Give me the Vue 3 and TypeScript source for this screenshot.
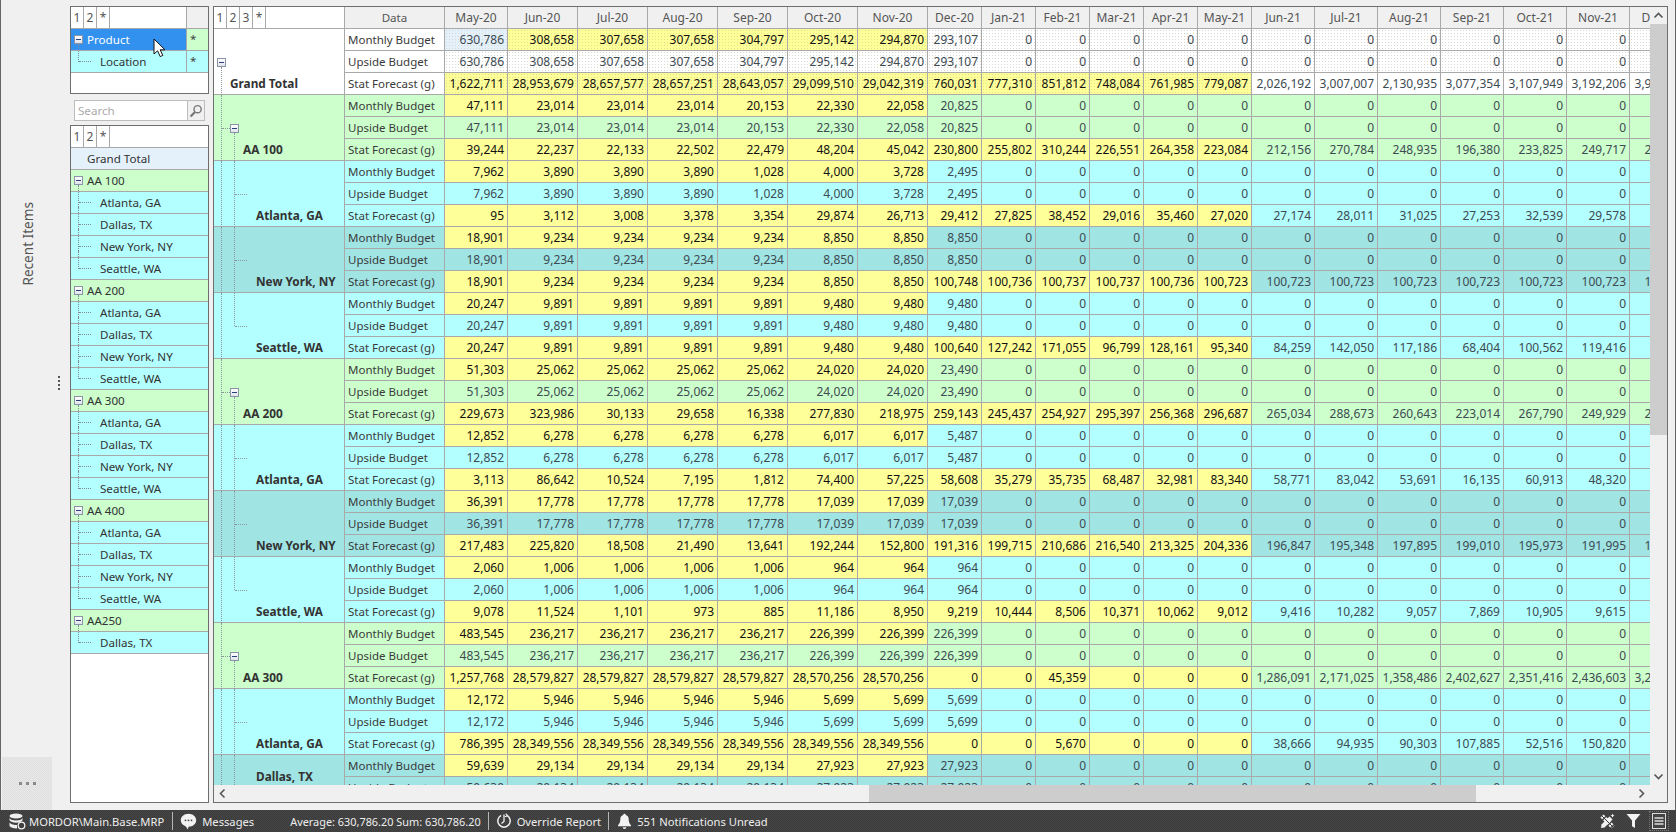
<script setup lang="ts">
type Tone = "white" | "green" | "cyan" | "teal"

interface Section {
  label: string
  level: number
  tone: Tone
  budget: string[]
  stat: string[]
  lastChild?: boolean
  cutOff?: boolean
}

const months = [
  "May-20", "Jun-20", "Jul-20", "Aug-20", "Sep-20", "Oct-20", "Nov-20", "Dec-20",
  "Jan-21", "Feb-21", "Mar-21", "Apr-21", "May-21", "Jun-21", "Jul-21", "Aug-21",
  "Sep-21", "Oct-21", "Nov-21", "Dec-21",
]
const widths = [63, 70, 70, 70, 70, 70, 70, 54, 54, 54, 54, 54, 54, 63, 63, 63, 63, 63, 63, 63]

const rowNames = ["Monthly Budget", "Upside Budget", "Stat Forecast (g)"]

const w = (v: string, n: number) => Array<string>(n).fill(v)

const sections: Section[] = [
  {
    label: "Grand Total", level: 0, tone: "white",
    budget: ["630,786", "308,658", "307,658", "307,658", "304,797", "295,142", "294,870", "293,107"],
    stat: ["1,622,711", "28,953,679", "28,657,577", "28,657,251", "28,643,057", "29,099,510", "29,042,319", "760,031", "777,310", "851,812", "748,084", "761,985", "779,087", "2,026,192", "3,007,007", "2,130,935", "3,077,354", "3,107,949", "3,192,206", "3,912,340"],
  },
  {
    label: "AA 100", level: 1, tone: "green",
    budget: ["47,111", ...w("23,014", 3), "20,153", "22,330", "22,058", "20,825"],
    stat: ["39,244", "22,237", "22,133", "22,502", "22,479", "48,204", "45,042", "230,800", "255,802", "310,244", "226,551", "264,358", "223,084", "212,156", "270,784", "248,935", "196,380", "233,825", "249,717", "256,120"],
  },
  {
    label: "Atlanta, GA", level: 2, tone: "cyan",
    budget: ["7,962", ...w("3,890", 3), "1,028", "4,000", "3,728", "2,495"],
    stat: ["95", "3,112", "3,008", "3,378", "3,354", "29,874", "26,713", "29,412", "27,825", "38,452", "29,016", "35,460", "27,020", "27,174", "28,011", "31,025", "27,253", "32,539", "29,578", "30,112"],
  },
  {
    label: "New York, NY", level: 2, tone: "teal",
    budget: ["18,901", ...w("9,234", 4), ...w("8,850", 3)],
    stat: ["18,901", ...w("9,234", 4), "8,850", "8,850", "100,748", "100,736", "100,737", "100,737", "100,736", ...w("100,723", 8)],
  },
  {
    label: "Seattle, WA", level: 2, tone: "cyan", lastChild: true,
    budget: ["20,247", ...w("9,891", 4), ...w("9,480", 3)],
    stat: ["20,247", ...w("9,891", 4), "9,480", "9,480", "100,640", "127,242", "171,055", "96,799", "128,161", "95,340", "84,259", "142,050", "117,186", "68,404", "100,562", "119,416", "90,311"],
  },
  {
    label: "AA 200", level: 1, tone: "green",
    budget: ["51,303", ...w("25,062", 4), "24,020", "24,020", "23,490"],
    stat: ["229,673", "323,986", "30,133", "29,658", "16,338", "277,830", "218,975", "259,143", "245,437", "254,927", "295,397", "256,368", "296,687", "265,034", "288,673", "260,643", "223,014", "267,790", "249,929", "261,004"],
  },
  {
    label: "Atlanta, GA", level: 2, tone: "cyan",
    budget: ["12,852", ...w("6,278", 4), "6,017", "6,017", "5,487"],
    stat: ["3,113", "86,642", "10,524", "7,195", "1,812", "74,400", "57,225", "58,608", "35,279", "35,735", "68,487", "32,981", "83,340", "58,771", "83,042", "53,691", "16,135", "60,913", "48,320", "51,220"],
  },
  {
    label: "New York, NY", level: 2, tone: "teal",
    budget: ["36,391", ...w("17,778", 4), ...w("17,039", 3)],
    stat: ["217,483", "225,820", "18,508", "21,490", "13,641", "192,244", "152,800", "191,316", "199,715", "210,686", "216,540", "213,325", "204,336", "196,847", "195,348", "197,895", "199,010", "195,973", "191,995", "193,402"],
  },
  {
    label: "Seattle, WA", level: 2, tone: "cyan", lastChild: true,
    budget: ["2,060", ...w("1,006", 4), ...w("964", 3)],
    stat: ["9,078", "11,524", "1,101", "973", "885", "11,186", "8,950", "9,219", "10,444", "8,506", "10,371", "10,062", "9,012", "9,416", "10,282", "9,057", "7,869", "10,905", "9,615", "9,880"],
  },
  {
    label: "AA 300", level: 1, tone: "green",
    budget: ["483,545", ...w("236,217", 4), ...w("226,399", 3)],
    stat: ["1,257,768", ...w("28,579,827", 4), "28,570,256", "28,570,256", "0", "0", "45,359", "0", "0", "0", "1,286,091", "2,171,025", "1,358,486", "2,402,627", "2,351,416", "2,436,603", "3,204,118"],
  },
  {
    label: "Atlanta, GA", level: 2, tone: "cyan",
    budget: ["12,172", ...w("5,946", 4), ...w("5,699", 3)],
    stat: ["786,395", ...w("28,349,556", 6), "0", "0", "5,670", "0", "0", "0", "38,666", "94,935", "90,303", "107,885", "52,516", "150,820", "98,000"],
  },
  {
    label: "Dallas, TX", level: 2, tone: "teal", cutOff: true,
    budget: ["59,639", ...w("29,134", 4), ...w("27,923", 3)],
    stat: [],
  },
]

const listGroups = [
  { name: "AA 100", items: ["Atlanta, GA", "Dallas, TX", "New York, NY", "Seattle, WA"] },
  { name: "AA 200", items: ["Atlanta, GA", "Dallas, TX", "New York, NY", "Seattle, WA"] },
  { name: "AA 300", items: ["Atlanta, GA", "Dallas, TX", "New York, NY", "Seattle, WA"] },
  { name: "AA 400", items: ["Atlanta, GA", "Dallas, TX", "New York, NY", "Seattle, WA"] },
  { name: "AA250", items: ["Dallas, TX"] },
]

function rowValues(s: Section, row: number): string[] {
  if (row === 2) return s.stat.length ? s.stat : w("0", 20)
  return months.map((_, i) => s.budget[i] ?? "0")
}

function cellClass(s: Section, row: number, col: number) {
  const yellow = row === 0 ? col < 7 : row === 2 ? col < 13 : false
  const grand = s.level === 0
  return {
    yellow: yellow && !(grand && row === 0 && col === 0),
    stipple: grand && !(row === 2 && col >= 13),
    picked: grand && row === 0 && col === 0,
  }
}
</script>

<template>
  <div class="window">
    <div class="workspace">
      <aside class="recent">
        <div class="recent-title"><span>Recent Items</span></div>
        <div class="recent-more">
          <i></i><i></i><i></i>
        </div>
      </aside>

      <div class="splitter">
        <i></i><i></i><i></i><i></i>
      </div>

      <div class="left-pane">
        <section class="box fields">
          <div class="line head">
            <span class="lvl">1</span><span class="lvl">2</span><span class="lvl">*</span>
            <span class="fill"></span>
            <span class="star-head"></span>
          </div>
          <div class="line picked-line">
            <span class="minus"></span>
            <span class="fill name-top">Product</span>
            <span class="star green">*</span>
          </div>
          <div class="line cyan">
            <span class="conn top-conn"></span>
            <span class="fill name-child">Location</span>
            <span class="star cyan">*</span>
          </div>
        </section>

        <div class="search">
          <span class="search-text">Search</span>
          <span class="search-btn">
            <svg width="14" height="14" viewBox="0 0 14 14" fill="none" stroke="#777" stroke-width="1.4">
              <circle cx="8.6" cy="5.2" r="3.6" />
              <path d="M6 8 1.6 12.6" stroke-width="2.2" />
            </svg>
          </span>
        </div>

        <section class="box list">
          <div class="line head">
            <span class="lvl">1</span><span class="lvl">2</span><span class="lvl">*</span>
            <span class="fill"></span>
          </div>
          <div class="line total"><span class="name-top pad">Grand Total</span></div>
          <template v-for="group in listGroups" :key="group.name">
            <div class="line green">
              <span class="minus"></span>
              <span class="name-top">{{ group.name }}</span>
            </div>
            <div v-for="(item, i) in group.items" :key="item" class="line cyan">
              <span class="conn" :class="{ 'conn-end': i === group.items.length - 1 }"></span>
              <span class="name-child">{{ item }}</span>
            </div>
          </template>
        </section>
      </div>

      <section class="box pivot">
        <div class="pivot-top">
          <div class="viewport">
            <div class="sheet">
              <div class="pivot-head">
                <div class="corner">
                  <span class="lvl">1</span><span class="lvl">2</span><span class="lvl">3</span><span class="lvl">*</span>
                </div>
                <div class="data-head">Data</div>
                <div v-for="(m, i) in months" :key="m" class="month" :style="{ width: widths[i] + 'px' }">{{ m }}</div>
              </div>

              <div v-for="(s, si) in sections" :key="si" class="group" :class="s.tone">
                <div class="group-head" :class="'level-' + s.level">
                  <span v-if="s.level > 0" class="tree-v1"></span>
                  <span v-if="s.level === 0" class="tree-v1 from-icon"></span>
                  <span v-if="s.level === 1" class="tree-v2 from-icon"></span>
                  <span v-if="s.level === 2" class="tree-v2" :class="{ 'to-mid': s.lastChild }"></span>
                  <span v-if="s.level === 1" class="tree-h h1"></span>
                  <span v-if="s.level === 2" class="tree-h h2"></span>
                  <span v-if="s.level < 2" class="minus tree-icon"></span>
                  <span class="group-label" :class="{ 'cut-off': s.cutOff }">{{ s.label }}</span>
                </div>
                <div class="group-rows">
                  <div v-for="(name, r) in rowNames" :key="name" class="row">
                    <div class="row-name">{{ name }}</div>
                    <div
                      v-for="(val, c) in rowValues(s, r)"
                      :key="c"
                      class="cell"
                      :class="cellClass(s, r, c)"
                      :style="{ width: widths[c] + 'px' }"
                    >{{ val }}</div>
                  </div>
                </div>
              </div>
            </div>
          </div>

          <div class="vscroll">
            <svg class="arrow" width="17" height="17" viewBox="0 0 17 17" fill="none" stroke="#555" stroke-width="1.6"><path d="M4.5 10.5 8.5 6.5l4 4" /></svg>
            <div class="vtrack"><div class="vthumb"></div></div>
            <svg class="arrow" width="17" height="17" viewBox="0 0 17 17" fill="none" stroke="#555" stroke-width="1.6"><path d="M4.5 6.5 8.5 10.5l4-4" /></svg>
          </div>
        </div>
        <div class="hscroll">
          <svg class="arrow" width="17" height="17" viewBox="0 0 17 17" fill="none" stroke="#555" stroke-width="1.6"><path d="M10.5 4.5 6.5 8.5l4 4" /></svg>
          <div class="htrack"><div class="hthumb"></div></div>
          <svg class="arrow" width="17" height="17" viewBox="0 0 17 17" fill="none" stroke="#555" stroke-width="1.6"><path d="M6.5 4.5 10.5 8.5l-4 4" /></svg>
          <span class="scroll-corner"></span>
        </div>
      </section>

      <svg class="cursor" width="14" height="20" viewBox="0 0 14 20">
        <path d="M1 1v15l3.6-3.2 2.6 5.8 2.6-1.2-2.6-5.6H12z" fill="#fff" stroke="#111" stroke-width="1" />
      </svg>
    </div>

    <footer class="status">
      <svg class="s-db" width="17" height="17" viewBox="0 0 17 17" fill="#eee">
        <ellipse cx="7" cy="3" rx="6.5" ry="2.6" />
        <path d="M.5 5c1 1.800 3.500 2.500 6.500 2.500S12.500 6.800 13.500 5v2.300c-1 1.700-3.500 2.400-6.500 2.400S1.500 9 .5 7.300z" />
        <path d="M.5 9.600c1 1.700 3.500 2.400 6.500 2.400h1v3.500c-4 0-6.500-1-7.500-2.500z" />
        <circle cx="12.500" cy="12.500" r="3.300" fill="none" stroke="#eee" stroke-width="1.300" />
      </svg>
      <span class="s-text s-path">MORDOR\Main.Base.MRP</span>
      <i class="s-sep s-sep1"></i>
      <svg class="s-msg" width="17" height="17" viewBox="0 0 17 17">
        <path d="M8.500.8c4.300 0 7.700 2.900 7.700 6.500s-3.400 6.500-7.700 6.500l-.6 2.800-2.300-3.300C2.800 12.300.8 10 .8 7.300.8 3.700 4.200.8 8.500.8z" fill="#f2f2f2" />
        <circle cx="5.500" cy="7.300" r=".9" fill="#444" /><circle cx="8.500" cy="7.300" r=".9" fill="#444" /><circle cx="11.500" cy="7.300" r=".9" fill="#444" />
      </svg>
      <span class="s-text s-messages">Messages</span>
      <span class="s-text s-avg">Average: 630,786.20 Sum: 630,786.20</span>
      <i class="s-sep s-sep2"></i>
      <svg class="s-over" width="16" height="16" viewBox="0 0 16 16" fill="none" stroke="#f0f0f0" stroke-width="1.500">
        <path d="M5.200 2.400a6.200 6.200 0 1 0 5.600 0" />
        <path d="M8 1.500v7L5.500 10.500" stroke-width="1.300" />
        <path d="M9.800 .6 11.500 2.800 9 3.800" stroke-width="1.200" />
      </svg>
      <span class="s-text s-report">Override Report</span>
      <i class="s-sep s-sep3"></i>
      <svg class="s-bell" width="15" height="16" viewBox="0 0 15 16" fill="#f2f2f2">
        <path d="M7.500 .8c.8 0 1.300.6 1.300 1.300 2 .6 2.900 2.200 2.900 4.400 0 2.800.8 4.300 2.300 5.700v1H1v-1c1.500-1.400 2.300-2.900 2.300-5.700 0-2.200.9-3.800 2.900-4.400 0-.7.500-1.300 1.300-1.300z" />
        <path d="M5.700 14.200h3.600a1.800 1.800 0 0 1-3.600 0z" />
      </svg>
      <span class="s-text s-notes">551 Notifications Unread</span>
      <span class="s-spacer"></span>
      <svg class="s-tools" width="17" height="17" viewBox="0 0 17 17" fill="none" stroke="#f2f2f2">
        <path d="M2.500 11.500 10.500 3.500l3 3-8 8-3.500.5z" fill="#f2f2f2" stroke="none" />
        <path d="M3 3 14 14" stroke-width="4.500" stroke-dasharray="2.500 1.300" />
        <path d="M3 3 14 14" stroke="#3c3c3c" stroke-width="1" />
        <path d="M13.500 .6l.6 1.500 1.500.6-1.500.6-.6 1.500-.6-1.500-1.500-.6 1.500-.6z" fill="#f2f2f2" stroke="none" />
      </svg>
      <svg class="s-funnel" width="15" height="16" viewBox="0 0 15 16" fill="#f2f2f2">
        <path d="M.5 1h14L9 7.500V15l-3-1.800V7.500z" />
      </svg>
      <span class="s-list">
        <svg width="14" height="16" viewBox="0 0 14 16" fill="none" stroke="#ddd">
          <rect x=".5" y=".5" width="13" height="15" fill="#444" />
          <path d="M2.500 5h9M2.500 8h9M2.500 11h9" stroke-width="1.600" />
        </svg>
      </span>
    </footer>
  </div>
</template>

<style scoped>
.window {
  position: relative;
  display: flex;
  flex-direction: column;
  width: 1676px;
  height: 832px;
  overflow: hidden;
  box-sizing: border-box;
  background: #f0f0f0;
  font-family: "Noto Sans", "Open Sans", sans-serif;
  font-size: 12px;
  color: #333;
}

.workspace {
  flex: 1;
  min-height: 0;
  display: flex;
  box-sizing: border-box;
  padding: 6px 7px 7px 1px;
  border-left: 1px solid #666;
  border-right: 1px solid #666;
}

.recent {
  width: 50px;
  margin: -6px 0 -7px 0;
  display: flex;
  flex-direction: column;
}

.recent-title {
  flex: 1;
  display: flex;
  align-items: center;
  justify-content: center;
  padding-bottom: 270px;
}

.recent-title span {
  writing-mode: vertical-rl;
  transform: rotate(180deg);
  font-size: 13.6px;
  color: #555;
}

.recent-more {
  height: 53px;
  display: flex;
  align-items: center;
  justify-content: center;
  gap: 4px;
  background-color: #e9e9e9;
  background-image: repeating-conic-gradient(#dedede 0 25%, transparent 0 50%);
  background-size: 2px 2px;
}

.recent-more i {
  width: 3px;
  height: 3px;
  background: #8a8a8a;
}

.splitter {
  width: 18px;
  display: flex;
  flex-direction: column;
  align-items: flex-start;
  justify-content: center;
  gap: 2px;
  padding: 0 0 44px 6px;
  box-sizing: border-box;
}

.splitter i {
  width: 2px;
  height: 2px;
  background: #555;
}

.box {
  box-sizing: border-box;
  background: #fff;
  border: 1px solid #6e6e6e;
}

.left-pane {
  width: 139px;
  margin-right: 4px;
  display: flex;
  flex-direction: column;
}

.fields {
  height: 88px;
  flex-shrink: 0;
}

.line {
  display: flex;
  align-items: center;
  height: 22px;
  box-sizing: border-box;
  border-bottom: 1px solid #a9a9a9;
  position: relative;
  font-size: 11.6px;
}

.head {
  border-bottom-color: #a9a9a9;
  color: #555;
}

.lvl {
  width: 13px;
  height: 100%;
  box-sizing: border-box;
  border-right: 1px solid #a9a9a9;
  text-align: center;
  line-height: 21px;
  font-size: 12px;
  color: #555;
  flex-shrink: 0;
}

.fill {
  flex: 1;
}

.star-head {
  width: 22px;
  height: 100%;
  box-sizing: border-box;
  background: #f0f0f0;
  border-left: 1px solid #a9a9a9;
}

.star {
  width: 22px;
  height: 100%;
  box-sizing: border-box;
  border-left: 1px solid #a9a9a9;
  padding: 1px 0 0 3px;
  line-height: 18px;
  color: #444;
}

.green {
  background: #ccffcc;
}

.cyan {
  background: #b3ffff;
}

.teal {
  background: #a0e4e4;
}

.white {
  background: #fff;
}

.picked-line {
  background: #3291ee;
  color: #fff;
}

.total {
  background: #e4f1fb;
}

.minus {
  position: relative;
  display: block;
  width: 9px;
  height: 9px;
  flex-shrink: 0;
  box-sizing: border-box;
  margin: 0 4px 0 3px;
  border: 1px solid #8a94a6;
  background: linear-gradient(#ffffff, #dfe3ec);
}

.minus::after {
  content: "";
  position: absolute;
  left: 1px;
  right: 1px;
  top: 3px;
  height: 1px;
  background: #2b3f78;
}

.name-top {
  padding-left: 0;
}

.picked-line .name-top {
  color: #fff;
}

.pad {
  padding-left: 16px;
}

.name-child {
  padding-left: 29px;
}

.conn {
  position: absolute;
  left: 7px;
  top: -7px;
  width: 13px;
  height: 28px;
  box-sizing: border-box;
  border-left: 1px dotted #7f8c96;
}

.conn::after {
  content: "";
  position: absolute;
  left: 0;
  top: 17px;
  width: 12px;
  border-top: 1px dotted #7f8c96;
}

.conn-end {
  height: 18px;
}

.top-conn {
  height: 18px;
}

.search {
  height: 21px;
  margin: 6px 4px 4px 4px;
  flex-shrink: 0;
  display: flex;
  box-sizing: border-box;
  background: #fff;
  border: 1px solid #bdbdbd;
}

.search-text {
  flex: 1;
  padding-left: 3px;
  line-height: 19px;
  color: #aaa;
  font-size: 11.6px;
}

.search-btn {
  width: 16px;
  display: flex;
  align-items: center;
  justify-content: center;
  background: #f0f0f0;
  border-left: 1px solid #bdbdbd;
}

.list {
  flex: 1;
  min-height: 0;
  overflow: hidden;
}

.pivot {
  flex: 1;
  min-width: 0;
  display: flex;
  flex-direction: column;
}

.pivot-top {
  flex: 1;
  min-height: 0;
  display: flex;
}

.viewport {
  flex: 1;
  min-width: 0;
  overflow: hidden;
  background: #fff;
}

.sheet {
  width: max-content;
}

.pivot-head {
  display: flex;
  height: 22px;
}

.corner {
  width: 131px;
  display: flex;
  box-sizing: border-box;
  background: #fff;
  border-right: 1px solid #a9a9a9;
  border-bottom: 1px solid #a9a9a9;
}

.data-head,
.month {
  box-sizing: border-box;
  flex-shrink: 0;
  background: #f0f0f0;
  border-right: 1px solid #a9a9a9;
  border-bottom: 1px solid #a9a9a9;
  text-align: center;
  line-height: 22px;
  color: #555;
}

.data-head {
  width: 100px;
  font-size: 11.6px;
}

.group {
  display: flex;
}

.group-head {
  position: relative;
  width: 131px;
  flex-shrink: 0;
  box-sizing: border-box;
  display: flex;
  align-items: flex-end;
  border-bottom: 1px solid #a9a9a9;
  border-right: 1px solid #a9a9a9;
}

.group-label {
  font-weight: 700;
  font-size: 11.8px;
  line-height: 22px;
  color: #333;
}

.level-0 .group-label {
  padding-left: 16px;
}

.level-1 .group-label {
  padding-left: 29px;
}

.level-2 .group-label {
  padding-left: 42px;
}

.cut-off {
  padding-bottom: 33px;
}

.tree-v1,
.tree-v2 {
  position: absolute;
  top: 0;
  bottom: -1px;
  border-left: 1px dotted #8c9aa0;
}

.tree-v1 {
  left: 7px;
}

.tree-v2 {
  left: 20px;
}

.from-icon {
  top: 38px;
}

.to-mid {
  bottom: 32px;
}

.tree-h {
  position: absolute;
  top: 33px;
  border-top: 1px dotted #8c9aa0;
}

.h1 {
  left: 8px;
  width: 8px;
}

.h2 {
  left: 21px;
  width: 12px;
}

.tree-icon {
  position: absolute;
  margin: 0;
  top: 29px;
  left: 3px;
}

.level-1 .tree-icon {
  left: 16px;
}

.group-rows {
  flex-shrink: 0;
}

.row {
  display: flex;
  height: 22px;
}

.row-name,
.cell {
  box-sizing: border-box;
  flex-shrink: 0;
  height: 22px;
  border-right: 1px solid #a9a9a9;
  border-bottom: 1px solid #a9a9a9;
  line-height: 22px;
  white-space: nowrap;
}

.row-name {
  width: 100px;
  padding-left: 3px;
  color: #3a3a3a;
  font-size: 11.5px;
}

.cell {
  overflow: hidden;
  text-align: right;
  padding-right: 3px;
  color: #3e4a52;
}

.cell.yellow {
  background-color: #ffff99;
  color: #111;
}

.cell.stipple {
  background-image: radial-gradient(#d8d8d4 0.55px, transparent 0.8px);
  background-size: 3px 3px;
}

.cell.stipple.yellow {
  background-image: radial-gradient(#e2e286 0.55px, transparent 0.8px);
}

.cell.picked {
  background-color: #e4f1fb;
}

.vscroll {
  width: 17px;
  flex-shrink: 0;
  display: flex;
  flex-direction: column;
  background: #f0f0f0;
}

.vtrack {
  flex: 1;
  min-height: 0;
}

.vthumb {
  height: 411px;
  margin-left: 0;
  background: #cdcdcd;
}

.arrow {
  flex-shrink: 0;
}

.hscroll {
  height: 17px;
  flex-shrink: 0;
  display: flex;
  background: #f0f0f0;
}

.htrack {
  flex: 1;
}

.hthumb {
  width: 607px;
  height: 100%;
  margin-left: 638px;
  background: #cdcdcd;
}

.scroll-corner {
  width: 17px;
}

.cursor {
  position: absolute;
  left: 153px;
  top: 38px;
}

.status {
  height: 22px;
  flex-shrink: 0;
  display: flex;
  align-items: center;
  background-color: #3c3c3c;
  background-image: repeating-conic-gradient(#454545 0 25%, transparent 0 50%);
  background-size: 2px 2px;
  color: #f0f0f0;
}

.status svg {
  flex-shrink: 0;
}

.s-text {
  white-space: nowrap;
  color: #eeeeee;
  font-size: 11.2px;
}

.s-sep {
  width: 1px;
  height: 18px;
  flex-shrink: 0;
  background: #b5b5b5;
}

.s-db {
  margin-left: 9px;
}

.s-path {
  margin-left: 3px;
}

.s-sep1 {
  margin-left: 8px;
}

.s-msg {
  margin-left: 7px;
}

.s-messages {
  margin-left: 5px;
}

.s-avg {
  margin-left: 36px;
  font-size: 10.9px;
}

.s-sep2 {
  margin-left: 7px;
}

.s-over {
  margin-left: 7px;
}

.s-report {
  margin-left: 5px;
}

.s-sep3 {
  margin-left: 7px;
}

.s-bell {
  margin-left: 8px;
}

.s-notes {
  margin-left: 5px;
}

.s-spacer {
  flex: 1;
}

.s-tools {
  margin-right: 10px;
}

.s-funnel {
  margin-right: 8px;
}

.s-list {
  display: flex;
  align-items: center;
  justify-content: center;
  width: 20px;
  height: 20px;
  margin-right: 7px;
  box-sizing: border-box;
  border: 1px dotted #777;
}
</style>

<style>
html,
body {
  margin: 0;
  background: #f0f0f0;
}
</style>
